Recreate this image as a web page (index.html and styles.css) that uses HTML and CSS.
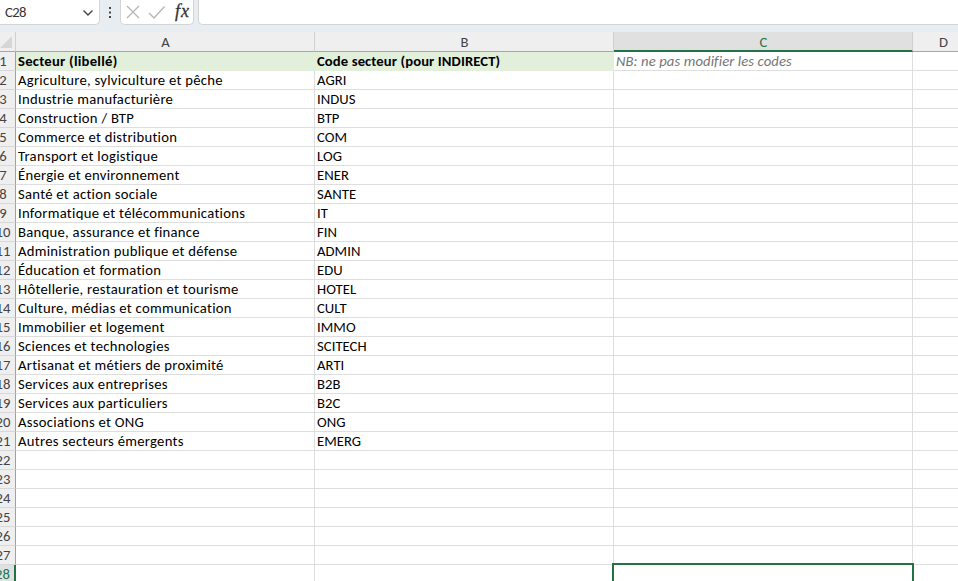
FILE: index.html
```html
<!DOCTYPE html>
<html lang="fr">
<head>
<meta charset="utf-8">
<title>Secteurs</title>
<link rel="stylesheet" href="styles.css">
</head>
<body>
<div class="bar">
  <div class="namebox"><span>C28</span><svg width="12" height="8" viewBox="0 0 12 8"><path d="M1.500 1.500 6 6l4.500-4.500" fill="none" stroke="#444" stroke-width="1.400"/></svg></div>
  <svg class="dots" width="4" height="13" viewBox="0 0 4 13"><path d="M1 1h2v2H1zM1 5.500h2v2H1zM1 10h2v2H1z" fill="#444"/></svg>
  <div class="actions">
    <svg width="72" height="24" viewBox="0 0 72 24" fill="none"><path d="m6 6 12 12M18 6 6 18" stroke="#b4b4b4" stroke-width="1.200"/><path d="m28 13 5 5L43.500 6.500" stroke="#b4b4b4" stroke-width="1.300"/></svg>
    <span class="fx">f<span>x</span></span>
  </div>
  <div class="formula"></div>
</div>
<div class="sheet" id="sheet">
  <div class="corner"><svg width="12" height="12" viewBox="0 0 12 12"><path d="M12 0v12H0z" fill="#d6d6d6"/></svg></div>
  <div class="col">A</div><div class="col">B</div><div class="col active">C</div><div class="col">D</div>
</div>
<script src="sheet.js"></script>
</body>
</html>
```
FILE: styles.css
```css
* { box-sizing: border-box; }
body { margin: 0; width: 958px; height: 581px; overflow: hidden; background: #fff; color: #000; font-family: Carlito, Lato, sans-serif; font-size: 14.67px; }
.bar { display: flex; height: 32px; background: #e8edf1; }
.bar > div { height: 25px; background: #fff; border: 1px solid #d2d4d6; border-top: 0; border-radius: 0 0 5px 5px; }
.bar .namebox { display: flex; align-items: center; justify-content: space-between; width: 100px; padding: 0 5px 0 5px; border-left: 0; border-bottom-left-radius: 0; color: #333; }
.namebox span { font-size: 14.67px; letter-spacing: -.6px; }
.namebox svg { margin-top: 2px; }
.dots { margin: 6px 8px 0; }
.bar .actions { position: relative; width: 74px; }
.actions svg { display: block; }
.fx { position: absolute; left: 54px; top: 0; font: italic 18px/22px "Liberation Serif", serif; color: #333; -webkit-text-stroke: .3px #333; }
.fx span { font-size: 18px; margin-left: 1px; }
.bar .formula { flex: 1; margin-left: 4px; border-right: 0; border-bottom-right-radius: 0; }
.sheet { position: relative; display: grid; grid-template-columns: 16px 299px 299px 299px 61px; grid-template-rows: 20px; grid-auto-rows: 19px; width: 974px; }
.corner { display: flex; justify-content: flex-end; align-items: center; padding-right: 3px; background: #efefef; border-right: 1px solid #d0d0d0; border-bottom: 1px solid #a6a6a6; overflow: hidden; }
.corner svg { flex: none; }
.col { height: 20px; line-height: 21px; text-align: center; padding-left: 1px; background: #efefef; color: #444; border-right: 1px solid #d0d0d0; border-bottom: 1px solid #a6a6a6; }
.col.active { background: #e0e0e0; color: #217346; border-bottom: 2px solid #217346; }
.num { display: flex; justify-content: center; height: 19px; line-height: 18px; padding-right: 9px; background: #efefef; color: #444; border-right: 1px solid #a0a0a0; border-bottom: 1px solid #d8d8d8; }
.num.active { background: #e0e0e0; color: #217346; border-right: 2px solid #217346; }
.cell { padding-left: 2px; line-height: 18px; height: 19px; white-space: nowrap; border-right: 1px solid #dedede; border-bottom: 1px solid #dedede; letter-spacing: .05px; }
.cell.label { letter-spacing: .28px; }
.cell.head { background: #e2efda; border-color: #e2efda; font-weight: 700; letter-spacing: .1px; }
.cell.head.label { letter-spacing: .25px; }
.cell.note { color: #757575; font-style: italic; letter-spacing: .1px; }
.selection { position: absolute; left: 612px; top: 531px; width: 302px; height: 22px; border: 2px solid #217346; }
```
FILE: sheet.js
```js
const rows = [
  ["Secteur (libellé)", "Code secteur (pour INDIRECT)", "NB: ne pas modifier les codes"],
  ["Agriculture, sylviculture et pêche", "AGRI"],
  ["Industrie manufacturière", "INDUS"],
  ["Construction / BTP", "BTP"],
  ["Commerce et distribution", "COM"],
  ["Transport et logistique", "LOG"],
  ["Énergie et environnement", "ENER"],
  ["Santé et action sociale", "SANTE"],
  ["Informatique et télécommunications", "IT"],
  ["Banque, assurance et finance", "FIN"],
  ["Administration publique et défense", "ADMIN"],
  ["Éducation et formation", "EDU"],
  ["Hôtellerie, restauration et tourisme", "HOTEL"],
  ["Culture, médias et communication", "CULT"],
  ["Immobilier et logement", "IMMO"],
  ["Sciences et technologies", "SCITECH"],
  ["Artisanat et métiers de proximité", "ARTI"],
  ["Services aux entreprises", "B2B"],
  ["Services aux particuliers", "B2C"],
  ["Associations et ONG", "ONG"],
  ["Autres secteurs émergents", "EMERG"]
];
const sheet = document.getElementById("sheet");
function add(className, text) {
  const el = document.createElement("div");
  el.className = className;
  el.textContent = text;
  sheet.appendChild(el);
}
for (let r = 0; r < 28; r++) {
  add(r === 27 ? "num active" : "num", r + 1);
  for (let c = 0; c < 4; c++) {
    let kind = "cell";
    if (c === 0) kind += " label";
    if (r === 0 && c < 2) kind += " head";
    if (r === 0 && c === 2) kind += " note";
    add(kind, (rows[r] || [])[c] || "");
  }
}
add("selection", "");
```
